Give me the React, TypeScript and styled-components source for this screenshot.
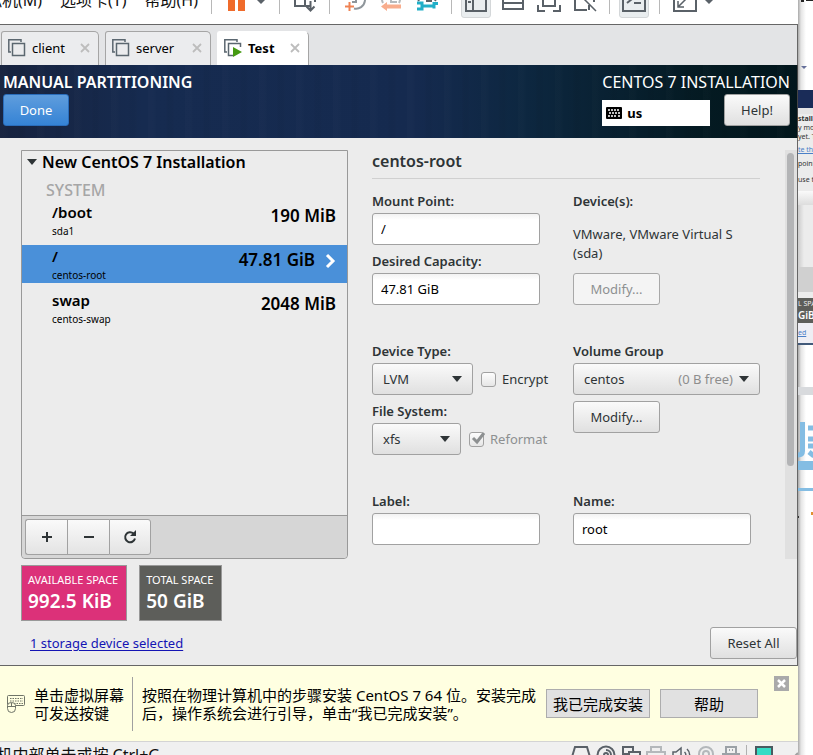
import React, { useState } from "react";
import styled, { createGlobalStyle, css } from "styled-components";

const guest = `"Noto Sans", "Noto Sans CJK SC", sans-serif`;
const host = `"Noto Sans", "Noto Sans CJK SC", sans-serif`;

const GlobalStyle = createGlobalStyle`
  * { box-sizing: border-box; }
  body { margin: 0; background: #fff; font-family: ${guest}; font-size: 13px; color: #2e3436; }
  button, input, select { font: inherit; color: inherit; margin: 0; }
`;

const Desktop = styled.div`
  display: grid;
  grid-template-columns: minmax(0, 1fr) 15px;
  height: 100vh;
  overflow: hidden;
`;

const VmWindow = styled.div`
  display: flex;
  flex-direction: column;
  min-width: 0;
  background: #ececec;
`;

/* ---------- menu and tool bar ---------- */

const TopBar = styled.header`
  flex: none;
  height: 24px;
  overflow: hidden;
  background: #fff;
`;

const TopBarInner = styled.div`
  display: flex;
  align-items: center;
  height: 48px;
  margin-top: -24px;
`;

const MenuBar = styled.nav`
  display: flex;
  justify-content: flex-end;
  gap: 18px;
  width: 198px;
  flex: none;
`;

const MenuItem = styled.button`
  border: 0;
  padding: 0;
  background: none;
  color: #111;
  font: 16px/24px ${host};
  white-space: nowrap;
`;

const Separator = styled.span<{ $before: number }>`
  flex: none;
  width: 1px;
  height: 28px;
  margin-left: ${(p) => p.$before}px;
  background: #b8b8b8;
`;

const Tool = styled.button<{ $before: number; $active?: boolean; $small?: boolean }>`
  flex: none;
  display: flex;
  align-items: center;
  justify-content: center;
  width: ${(p) => (p.$active ? 30 : p.$small ? 8 : 24)}px;
  height: 36px;
  padding: 0;
  margin-left: ${(p) => p.$before}px;
  border: 1px solid ${(p) => (p.$active ? "#d4d7d9" : "transparent")};
  border-radius: 3px;
  background: ${(p) => (p.$active ? "#e9edef" : "none")};
  svg { flex: none; }
`;

/* ---------- tabs ---------- */

const TabStrip = styled.div`
  flex: none;
  display: flex;
  align-items: flex-end;
  gap: 6px;
  height: 41px;
  padding-left: 1px;
  background: #e3e4e6;
  border-top: 1px solid #666;
  border-right: 1px solid #666;
`;

const Tab = styled.div<{ $active?: boolean; $width: number }>`
  display: flex;
  align-items: center;
  width: ${(p) => p.$width}px;
  height: 34px;
  padding: 0 8px 2px 5px;
  border: 1px solid ${(p) => (p.$active ? "#fff" : "#a5a5a5")};
  border-right-color: #a5a5a5;
  border-bottom: 0;
  border-radius: 3px 5px 0 0;
  background: ${(p) => (p.$active ? "#fff" : "#ebecee")};
`;

const TabName = styled.button<{ $active?: boolean }>`
  display: flex;
  align-items: center;
  gap: 5px;
  flex: 1;
  padding: 0;
  border: 0;
  background: none;
  color: #000;
  font: ${(p) => (p.$active ? "bold" : "normal")} 13px/20px ${host};
`;

const TabClose = styled.button`
  display: flex;
  padding: 0;
  border: 0;
  background: none;
`;

/* ---------- installer ---------- */

const Banner = styled.div`
  flex: none;
  display: flex;
  justify-content: space-between;
  padding: 7px 7px 12px 3px;
  border-right: 1px solid #444;
  color: #fff;
  background:
    repeating-linear-gradient(90deg, rgba(255, 255, 255, 0.01) 0 5px, transparent 9px 17px, rgba(0, 0, 0, 0.03) 20px 23px, transparent 27px 37px),
    linear-gradient(90deg, #17233f 0%, #162b50 18%, #152a4f 52%, #0d2740 66%, #041a22 88%, #02161c 100%);
`;

const BannerSide = styled.div`
  display: flex;
  flex-direction: column;
  align-items: flex-start;
  gap: 2px;
`;

const BannerTitle = styled.h1<{ $light?: boolean }>`
  margin: 0;
  font-size: 16px;
  line-height: 20px;
  font-weight: ${(p) => (p.$light ? 400 : 600)};
  white-space: nowrap;
`;

const BannerControls = styled.div`
  display: flex;
  align-items: flex-end;
  justify-content: space-between;
  width: 100%;
`;

const KeyboardLayout = styled.button`
  display: flex;
  align-items: center;
  gap: 5px;
  width: 108px;
  height: 26px;
  padding: 0 4px;
  border: 0;
  background: #fff;
  color: #000;
  font-weight: 700;
`;

const Button = styled.button<{ $primary?: boolean; $width?: number }>`
  height: 32px;
  width: ${(p) => (p.$width ? `${p.$width}px` : "auto")};
  padding: 0 8px;
  border: 1px solid #a1a1a1;
  border-radius: 3px;
  color: #2e3436;
  background: linear-gradient(#fafafa, #e0e0e0);
  white-space: nowrap;
  &:disabled { color: #8d9091; background: #f4f4f4; border-color: #a8a8a8; }
  ${(p) =>
    p.$primary &&
    css`
      color: #fff;
      border-color: #2a6dbb;
      background: linear-gradient(#5f9ddd, #3583d5);
    `}
`;

const Screen = styled.main`
  flex: none;
  padding-top: 12px;
  border-right: 1px solid #666;
  border-bottom: 1px solid #666;
`;

const Columns = styled.div`
  display: flex;
  padding-left: 21px;
`;

const Panel = styled.section`
  flex: 0 1 327px;
  display: flex;
  flex-direction: column;
  border: 1px solid #999;
  border-radius: 0 0 4px 4px;
`;

const PanelHeading = styled.h2`
  display: flex;
  align-items: center;
  gap: 5px;
  margin: 0;
  padding: 1px 5px 0;
  color: #000;
  font-size: 16px;
  line-height: 20px;
  font-weight: 600;
`;

const GroupName = styled.h3`
  margin: 0;
  padding: 8px 24px 1px;
  color: #a6a6a6;
  font-size: 16px;
  line-height: 20px;
  font-weight: 500;
`;

const MountList = styled.div`
  flex: 1;
  display: flex;
  flex-direction: column;
  gap: 6px;
`;

const MountRow = styled.button<{ $selected?: boolean }>`
  display: flex;
  align-items: center;
  gap: 10px;
  height: 38px;
  padding: 0 11px 0 30px;
  border: 0;
  text-align: left;
  color: #000;
  background: ${(p) => (p.$selected ? "#4a90d9" : "transparent")};
`;

const MountName = styled.span`
  flex: 1;
  display: flex;
  flex-direction: column;
  strong { font-size: 15px; line-height: 22px; font-weight: 600; }
  small { font-size: 10px; line-height: 16px; }
`;

const MountSize = styled.span`
  padding-bottom: 8px;
  font-size: 17px;
  line-height: 20px;
  font-weight: 600;
`;

const PanelTools = styled.div`
  display: flex;
  padding: 3px;
  border-top: 1px solid #999;
  border-radius: 0 0 4px 4px;
  background: #d6d6d6;
`;

const PanelTool = styled.button`
  display: flex;
  align-items: center;
  justify-content: center;
  width: 42px;
  height: 36px;
  padding: 0;
  border: 1px solid #a1a1a1;
  border-right-width: 0;
  background: linear-gradient(#fafafa, #e3e3e3);
  &:first-child { border-radius: 3px 0 0 3px; }
  &:last-child { border-radius: 0 3px 3px 0; border-right-width: 1px; }
`;

const Details = styled.section`
  flex: 1;
  min-width: 0;
  padding: 0 25px 14px 24px;
`;

const DetailsTitle = styled.h2`
  margin: 0 0 10px;
  padding: 1px 0 7px;
  border-bottom: 1px solid #d0d0d0;
  font-size: 16px;
  line-height: 20px;
  font-weight: 600;
`;

const DetailGrid = styled.div`
  display: grid;
  grid-template-columns: 168px minmax(0, 1fr);
  column-gap: 33px;
  row-gap: 34px;
`;

const Stack = styled.div<{ $gap?: number }>`
  display: flex;
  flex-direction: column;
  align-items: flex-start;
  gap: ${(p) => p.$gap ?? 4}px;
`;

const Field = styled.div<{ $width?: number }>`
  display: flex;
  flex-direction: column;
  width: 100%;
  max-width: ${(p) => (p.$width ? `${p.$width}px` : "none")};
`;

const FieldLabel = styled.label`
  font-size: 13px;
  line-height: 24px;
  font-weight: 600;
`;

const FieldRow = styled.div`
  display: flex;
  align-items: center;
  gap: 8px;
`;

const TextInput = styled.input`
  width: 100%;
  height: 32px;
  padding: 0 8px;
  border: 1px solid #a1a1a1;
  border-radius: 3px;
  color: #000;
  background: linear-gradient(#f2f2f2, #fff 6px);
`;

const SelectBox = styled.span<{ $width?: number }>`
  flex: none;
  position: relative;
  display: block;
  width: ${(p) => (p.$width ? `${p.$width}px` : "100%")};
`;

const Select = styled.select`
  display: block;
  appearance: none;
  width: 100%;
  height: 32px;
  padding: 0 10px;
  border: 1px solid #a1a1a1;
  border-radius: 3px;
  background: linear-gradient(#fafafa, #e0e0e0);
`;

const SelectAdornment = styled.span`
  position: absolute;
  top: 0;
  right: 11px;
  bottom: 0;
  display: flex;
  align-items: center;
  gap: 6px;
  color: #8d8d8d;
  pointer-events: none;
`;

const CheckLabel = styled.label<{ $disabled?: boolean }>`
  display: flex;
  align-items: center;
  gap: 6px;
  white-space: nowrap;
  color: ${(p) => (p.$disabled ? "#8d9091" : "inherit")};
`;

const CheckFrame = styled.span`
  position: relative;
  display: flex;
  svg { position: absolute; left: 1px; top: -1px; pointer-events: none; }
`;

const CheckBox = styled.input`
  appearance: none;
  flex: none;
  width: 15px;
  height: 15px;
  border: 1px solid #a1a1a1;
  border-radius: 3px;
  background: linear-gradient(#fdfdfd, #e6e6e6);
`;

const DeviceText = styled.p`
  margin: 12px 0 6px;
  line-height: 19px;
`;

const ScrollTrack = styled.div`
  flex: none;
  width: 12px;
  padding: 3px 3px 0 2px;
  background: #e0e0e0;
`;

const ScrollThumb = styled.div`
  height: 77%;
  border-radius: 4px;
  background: #b3b4b6;
`;

const Summary = styled.div`
  display: flex;
  gap: 12px;
  padding: 6px 21px 0;
`;

const SpaceBox = styled.div<{ $color: string }>`
  display: flex;
  flex-direction: column;
  height: 56px;
  padding: 5px 8px 5px 6px;
  border: 1px solid #999;
  background: ${(p) => p.$color};
  color: #fff;
  white-space: nowrap;
  span { font-size: 11px; line-height: 18px; }
  strong { font-size: 19px; line-height: 25px; font-weight: 600; }
`;

const FooterRow = styled.div`
  display: flex;
  align-items: center;
  justify-content: space-between;
  padding: 6px 0 6px 30px;
`;

const DeviceLink = styled.a`
  color: #1414b4;
  text-underline-offset: 2px;
`;

/* ---------- hint bar and status bar ---------- */

const HintBar = styled.aside`
  flex: none;
  display: flex;
  align-items: center;
  height: 76px;
  padding: 0 9px 0 7px;
  background: #ffffe1;
  border-bottom: 1px solid #d4d4d4;
  color: #000;
  font: 15px/18px ${host};
`;

const HintText = styled.p<{ $wide?: boolean }>`
  margin: 0;
  padding-left: 9px;
  flex: ${(p) => (p.$wide ? "1 1 0" : "none")};
  white-space: nowrap;
`;

const HintRule = styled.span`
  width: 1px;
  height: 54px;
  margin-left: 8px;
  background: #a0a0a0;
`;

const HintButton = styled.button<{ $width: number }>`
  flex: none;
  width: ${(p) => p.$width}px;
  height: 29px;
  margin-right: 10px;
  padding: 0;
  border: 1px solid #adadad;
  background: #e1e1e1;
`;

const HintClose = styled.button`
  align-self: flex-start;
  display: flex;
  margin: 10px 0 0 6px;
  padding: 0;
  border: 0;
  background: none;
`;

const StatusBar = styled.footer`
  flex: none;
  display: flex;
  align-items: center;
  gap: 5px;
  height: 26px;
  background: #f0f0f0;
  color: #111;
`;

const StatusText = styled.div`
  display: flex;
  justify-content: flex-end;
  width: 160px;
  margin-right: auto;
  font: 16px/24px ${host};
  white-space: nowrap;
`;

const StatusRule = styled.span`
  width: 1px;
  height: 20px;
  margin: 0 3px 0 0;
  background: #b0b0b0;
`;

/* ---------- window showing behind on the right ---------- */

const Behind = styled.div`
  display: flex;
  flex-direction: column;
  overflow: hidden;
  background: linear-gradient(90deg, #a9a9a9, #e4e4e4 3px, #fff 8px);
  font-size: 7px;
  white-space: nowrap;
`;

const Band = styled.div<{ $h: number; $bg?: string; $lh?: number; $fg?: string }>`
  flex: none;
  height: ${(p) => p.$h}px;
  overflow: hidden;
  line-height: ${(p) => p.$lh ?? 9}px;
  color: ${(p) => p.$fg ?? "#333"};
  background: ${(p) => p.$bg ?? "transparent"};
  svg { display: block; }
  a { color: #4a80c8; }
  strong { font-size: 10px; font-weight: 600; }
`;

const ink = "#5a6168";

const Caret = ({ color = "#2e3436" }: { color?: string }) => (
  <svg width="10" height="6" viewBox="0 0 10 6"><path d="M0 0h10L5 6z" fill={color} /></svg>
);

const Stroke = ({ size = 24, color = ink, children }: { size?: number; color?: string; children: React.ReactNode }) => (
  <svg width={size} height={size} viewBox={`0 0 ${size} ${size}`} fill="none" stroke={color} strokeWidth="2">{children}</svg>
);

const VmIcon = ({ running }: { running?: boolean }) => (
  <svg width="20" height="20" viewBox="0 0 20 20" fill="none" stroke="#5b6770" strokeWidth="1.5">
    <path d="M4 14H1.8V1.8H14V4" />
    {running ? (
      <><path d="M10 17.5H5.5V5.5h12V9" /><path d="M10 9l9 5-9 5z" fill="#459a12" stroke="none" /></>
    ) : (
      <path d="M5.5 5.5h12v12h-12z" />
    )}
  </svg>
);

const CloseMark = () => (
  <svg width="10" height="10" viewBox="0 0 10 10" stroke="#bdbdbd" strokeWidth="1.8"><path d="M1 1l8 8M9 1L1 9" /></svg>
);

const KeyboardIcon = () => (
  <svg width="16" height="12" viewBox="0 0 16 12">
    <rect width="16" height="12" rx="1" fill="#000" />
    <path d="M2 3h12M3 6h11M2 9h2M5 9h6M12 9h2" stroke="#fff" strokeWidth="1.6" strokeDasharray="2 1" />
  </svg>
);

const tabs = [
  { name: "client", width: 98 },
  { name: "server", width: 106 },
  { name: "Test", width: 92 },
];

const mounts = [
  { path: "/boot", device: "sda1", size: "190 MiB" },
  { path: "/", device: "centos-root", size: "47.81 GiB" },
  { path: "swap", device: "centos-swap", size: "2048 MiB" },
];

function Toolbar() {
  return (
    <TopBar>
      <TopBarInner>
        <MenuBar aria-label="菜单">
          <MenuItem>虚拟机(M)</MenuItem>
          <MenuItem>选项卡(T)</MenuItem>
          <MenuItem>帮助(H)</MenuItem>
        </MenuBar>
        <Separator $before={13} />
        <Tool $before={13} aria-label="Pause">
          <svg width="24" height="24"><path d="M3 2h7v21H3zM13 2h7v21h-7z" fill="#f06b2b" /></svg>
        </Tool>
        <Tool $before={8} $small aria-label="Power options">
          <svg width="8" height="12"><path d="M0 6h8L4 10z" fill={ink} /></svg>
        </Tool>
        <Separator $before={14} />
        <Tool $before={13} aria-label="Send keys">
          <Stroke><path d="M12 18H2V4h20v10M12 4v14h5M17.500 13v9M13.500 18.500l4 4 4-4" /></Stroke>
        </Tool>
        <Separator $before={12} />
        <Tool $before={12} aria-label="Take snapshot">
          <Stroke><path d="M14 5v9h-4M12 20.500A9 9 0 1 0 5 12" stroke="#8f969b" /><path d="M7.500 14v9M3 18.500h9" stroke="#ef8354" /></Stroke>
        </Tool>
        <Tool $before={13} aria-label="Revert snapshot">
          <Stroke><path d="M20 15a9 9 0 1 0-16 0M12 6v8h6" stroke="#b5babd" /><path d="M2 18.500l6-4.500v2.500h14v4H8V23z" fill="#f8ad8d" stroke="none" /></Stroke>
        </Tool>
        <Tool $before={12} aria-label="Manage snapshots">
          <Stroke>
            <path d="M20 13a9 9 0 1 0-16 0M12 6v7h5" />
            <path d="M2 15h5v6H2M6 18h13M23 15.500h-4v5" stroke="#22afc8" strokeWidth="3" />
          </Stroke>
        </Tool>
        <Separator $before={12} />
        <Tool $before={9} $active aria-label="Show library">
          <Stroke><path d="M2 3h20v20H2zM9 3v20M4 9h3M4 14h3" /></Stroke>
        </Tool>
        <Tool $before={10} aria-label="Thumbnail bar">
          <Stroke><path d="M2 2h20v19H2zM2 15h20" /></Stroke>
        </Tool>
        <Tool $before={12} aria-label="Full screen">
          <Stroke><path d="M1 17v6h7M23 17v6h-7M1 8V2h7M23 8V2h-7M6 7h12v11H6z" /></Stroke>
        </Tool>
        <Tool $before={12} aria-label="Unity">
          <Stroke><path d="M14 22H2V5h12M8 5h13v9M16 22v-5" /><path d="M8 8l15 15" strokeWidth="1.500" /></Stroke>
        </Tool>
        <Separator $before={12} />
        <Tool $before={9} $active aria-label="Console">
          <Stroke><path d="M1 3h22v20H1zM5 15l5-4-5-4M12 15h7" /></Stroke>
        </Tool>
        <Separator $before={10} />
        <Tool $before={13} aria-label="Stretch">
          <Stroke><path d="M1 2h22v21H1z" /><path d="M5 19l14-14M5 13v6h6" strokeWidth="1.500" /></Stroke>
        </Tool>
        <Tool $before={8} $small aria-label="Stretch options">
          <svg width="8" height="12"><path d="M0 6h8L4 10z" fill={ink} /></svg>
        </Tool>
      </TopBarInner>
    </TopBar>
  );
}

function PartitionPanel() {
  const [selected, setSelected] = useState("/");
  return (
    <Panel>
      <PanelHeading><Caret />New CentOS 7 Installation</PanelHeading>
      <GroupName>SYSTEM</GroupName>
      <MountList>
        {mounts.map((m) => (
          <MountRow key={m.path} $selected={m.path === selected} onClick={() => setSelected(m.path)}>
            <MountName><strong>{m.path}</strong><small>{m.device}</small></MountName>
            <MountSize>{m.size}</MountSize>
            {m.path === selected && (
              <svg width="11" height="22" viewBox="0 0 11 22" fill="none" stroke="#fff" strokeWidth="3"><path d="M2 2l6 6-6 6" /></svg>
            )}
          </MountRow>
        ))}
      </MountList>
      <PanelTools>
        <PanelTool aria-label="Add"><Stroke size={12} color="#2e3436"><path d="M6 1v10M1 6h10" /></Stroke></PanelTool>
        <PanelTool aria-label="Remove"><Stroke size={12} color="#2e3436"><path d="M1 6h10" /></Stroke></PanelTool>
        <PanelTool aria-label="Reload">
          <Stroke size={14} color="#2e3436"><path d="M10.500 3.500A5 5 0 1 0 12 8.500" /><path d="M13 0v6H7z" fill="#2e3436" stroke="none" /></Stroke>
        </PanelTool>
      </PanelTools>
    </Panel>
  );
}

function MountDetails() {
  return (
    <Details>
      <DetailsTitle>centos-root</DetailsTitle>
      <DetailGrid>
        <Stack>
          <Field><FieldLabel htmlFor="mount">Mount Point:</FieldLabel><TextInput id="mount" defaultValue="/" /></Field>
          <Field><FieldLabel htmlFor="capacity">Desired Capacity:</FieldLabel><TextInput id="capacity" defaultValue="47.81 GiB" /></Field>
        </Stack>
        <Stack>
          <Field>
            <FieldLabel as="span">Device(s):</FieldLabel>
            <DeviceText>VMware, VMware Virtual S<br />(sda)</DeviceText>
          </Field>
          <Button disabled $width={87}>Modify...</Button>
        </Stack>
        <Stack>
          <Field>
            <FieldLabel htmlFor="type">Device Type:</FieldLabel>
            <FieldRow>
              <SelectBox $width={101}>
                <Select id="type"><option>LVM</option></Select>
                <SelectAdornment><Caret /></SelectAdornment>
              </SelectBox>
              <CheckLabel><CheckBox type="checkbox" />Encrypt</CheckLabel>
            </FieldRow>
          </Field>
          <Field>
            <FieldLabel htmlFor="fs">File System:</FieldLabel>
            <FieldRow>
              <SelectBox $width={89}>
                <Select id="fs"><option>xfs</option></Select>
                <SelectAdornment><Caret /></SelectAdornment>
              </SelectBox>
              <CheckLabel $disabled>
                <CheckFrame>
                  <CheckBox type="checkbox" defaultChecked disabled />
                  <svg width="16" height="15" viewBox="0 0 16 15" fill="none" stroke="#8d9091" strokeWidth="3"><path d="M3 7l4 4 7-9" /></svg>
                </CheckFrame>
                Reformat
              </CheckLabel>
            </FieldRow>
          </Field>
        </Stack>
        <Stack $gap={6}>
          <Field>
            <FieldLabel htmlFor="vg">Volume Group</FieldLabel>
            <SelectBox>
              <Select id="vg"><option>centos</option></Select>
              <SelectAdornment>(0 B free)<Caret /></SelectAdornment>
            </SelectBox>
          </Field>
          <Button $width={87}>Modify...</Button>
        </Stack>
        <Field><FieldLabel htmlFor="label">Label:</FieldLabel><TextInput id="label" /></Field>
        <Field $width={178}><FieldLabel htmlFor="name">Name:</FieldLabel><TextInput id="name" defaultValue="root" /></Field>
      </DetailGrid>
    </Details>
  );
}

function StatusIcons() {
  return (
    <>
      <Stroke size={20}><path d="M1 12L4 2h12l3 10v5H1z" /></Stroke>
      <Stroke size={20}><circle cx="10" cy="10" r="8.500" /><circle cx="10" cy="10" r="2" /><path d="M10 5a5 5 0 0 1 5 5" /></Stroke>
      <Stroke size={20}><path d="M7 9H2V2h10v4M8 7h11v8H8zM3 13l4-4M3 9v5h4" /></Stroke>
      <Stroke size={20} color="#b4b8bb"><path d="M5 7V2h10v5M1 15V7h18v8z" /></Stroke>
      <Stroke size={20}><path d="M2 7h3l5-4v14l-5-4H2zM13.500 7a4 4 0 0 1 0 6M16 4a8 8 0 0 1 0 12" strokeWidth="1.500" /></Stroke>
      <Stroke size={20} color="#b4b8bb"><circle cx="10" cy="9" r="7" /><circle cx="10" cy="9" r="3" /></Stroke>
      <Stroke size={20} color="#9ba1a6"><path d="M5 8V2h10v6M2 9h16v6H2zM8 5h1M11 5h1" /></Stroke>
    </>
  );
}

function WindowBehind() {
  return (
    <Behind aria-hidden="true">
      <Band $h={65}><svg width="15" height="3"><path d="M3 0h3v2H3zM8 0h7v1H8z" fill="#222" /></svg></Band>
      <Band $h={25}><svg width="15" height="8"><path d="M3 1h6L6 4z" fill="#66709a" /></svg></Band>
      <Band $h={18} $bg="#1a2c58" />
      <Band $h={6} $bg="#e4e4e4" />
      <Band $h={9} $bg="#ececec"><b>stallation</b></Band>
      <Band $h={9} $bg="#ececec">y mount</Band>
      <Band $h={9} $bg="#ececec">yet. The</Band>
      <Band $h={14} $bg="#ececec" $lh={18}><a href="#create">te them</a></Band>
      <Band $h={14} $bg="#ececec" $lh={18}>points</Band>
      <Band $h={22} $bg="#ececec" $lh={22}>use the</Band>
      <Band $h={14} $bg="linear-gradient(#fafafa, #ddd)" />
      <Band $h={62} $bg="linear-gradient(90deg, #ccc, #ececec 6px)" />
      <Band $h={25} $bg="#d0d0d0" />
      <Band $h={6} $bg="#ececec" />
      <Band $h={12} $bg="#5d5e5a" $fg="#eee" $lh={12}>L SPACE</Band>
      <Band $h={13} $bg="#5d5e5a" $fg="#fff" $lh={11}><strong>GiB</strong></Band>
      <Band $h={20} $bg="#eeeef4" $lh={20}><a href="#disks">ed</a></Band>
      <Band $h={2} $bg="#425a7a" />
      <Band $h={42} />
      <Band $h={8} $bg="#d8dadd" />
      <Band $h={26} />
      <Band $h={40}>
        <svg width="15" height="40" viewBox="0 0 15 40" fill="none" stroke="#84bde3" strokeWidth="5">
          <path d="M4.500 1v29q0 4-4.500 4M10 7h6M10 18h6M10 25h6M11 31l5 4" />
        </svg>
      </Band>
      <Band $h={9} $bg="#84bde3" />
      <Band $h={18} />
      <Band $h={3} $bg="#84bde3" />
      <Band $h={21} />
      <Band $h={8}><svg width="15" height="6"><path d="M13 0h2v3h-2z" fill="#e09030" /><path d="M0 4h1v2H0z" fill="#333" /></svg></Band>
    </Behind>
  );
}

export default function App() {
  return (
    <Desktop>
      <GlobalStyle />
      <VmWindow>
        <Toolbar />
        <TabStrip>
          {tabs.map((t) => {
            const active = t.name === "Test";
            return (
              <Tab key={t.name} $active={active} $width={t.width}>
                <TabName $active={active}><VmIcon running={active} />{t.name}</TabName>
                <TabClose aria-label={`Close ${t.name}`}><CloseMark /></TabClose>
              </Tab>
            );
          })}
        </TabStrip>
        <Banner>
          <BannerSide>
            <BannerTitle>MANUAL PARTITIONING</BannerTitle>
            <Button $primary $width={66}>Done</Button>
          </BannerSide>
          <BannerSide>
            <BannerTitle as="p" $light>CENTOS 7 INSTALLATION</BannerTitle>
            <BannerControls>
              <KeyboardLayout><KeyboardIcon />us</KeyboardLayout>
              <Button $width={66}>Help!</Button>
            </BannerControls>
          </BannerSide>
        </Banner>
        <Screen>
          <Columns>
            <PartitionPanel />
            <MountDetails />
            <ScrollTrack><ScrollThumb /></ScrollTrack>
          </Columns>
          <Summary>
            <SpaceBox $color="#dc3179"><span>AVAILABLE SPACE</span><strong>992.5 KiB</strong></SpaceBox>
            <SpaceBox $color="#5d5e5a"><span>TOTAL SPACE</span><strong>50 GiB</strong></SpaceBox>
          </Summary>
          <FooterRow>
            <DeviceLink href="#storage">1 storage device selected</DeviceLink>
            <Button $width={87}>Reset All</Button>
          </FooterRow>
        </Screen>
        <HintBar>
          <svg width="18" height="20" viewBox="0 0 18 20" fill="none" stroke="#6f7468">
            <rect x="0.500" y="1.500" width="17" height="10" rx="1" />
            <path d="M3 4.500h13M3 7h13M7 9.500h9" strokeDasharray="1.500 1" />
            <path d="M0.500 11.500q0-3 4-3t4 3v3q0 4-4 4t-4-4zM0.500 12.500h8M4.500 9v4" fill="#ffffe1" />
          </svg>
          <HintText>单击虚拟屏幕<br />可发送按键</HintText>
          <HintRule />
          <HintText $wide>按照在物理计算机中的步骤安装 CentOS 7 64 位。安装完成<br />后，操作系统会进行引导，单击“我已完成安装”。</HintText>
          <HintButton $width={104}>我已完成安装</HintButton>
          <HintButton $width={98}>帮助</HintButton>
          <HintClose aria-label="关闭">
            <svg width="15" height="15"><path d="M0 0h15v15H0z" fill="#aaa" /><path d="M4 4l7 7M11 4l-7 7" stroke="#fff" strokeWidth="2.500" /></svg>
          </HintClose>
        </HintBar>
        <StatusBar>
          <StatusText>虚拟机内部单击或按 Ctrl+G</StatusText>
          <StatusIcons />
          <StatusRule />
          <svg width="18" height="20"><path d="M1 2h16v16H1z" fill="#35dcc5" stroke="#4a5a60" strokeWidth="2" /></svg>
          <Stroke size={20} color="#a0a0a0"><path d="M14 14l6-6M18 18l2-2" /></Stroke>
        </StatusBar>
      </VmWindow>
      <WindowBehind />
    </Desktop>
  );
}
